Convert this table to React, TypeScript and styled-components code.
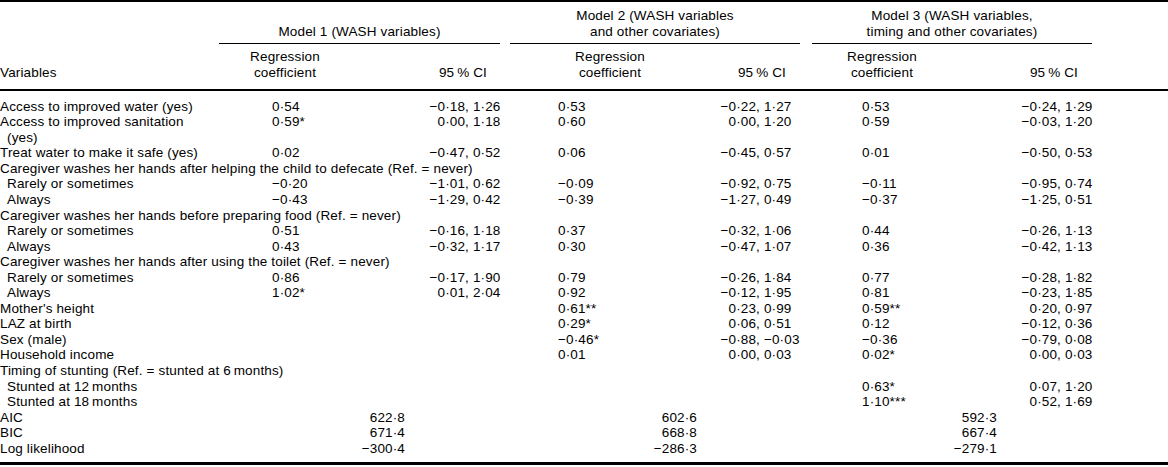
import React from 'react';
import styled, { createGlobalStyle } from 'styled-components';

const Global = createGlobalStyle`
  html, body { margin: 0; padding: 0; background: #fff; }
  body {
    font-family: "Liberation Sans", Arial, Helvetica, sans-serif;
    font-size: 13.5px;
    letter-spacing: 0.15px;
    color: #000;
  }
`;

const COLS = '219px 201px 80px 10px 195px 95px 12px 198px 82px 1fr';

const Table = styled.div`
  width: 1168px;
  border-top: 2px solid #000;
  border-bottom: 3px solid #000;
  line-height: 15.55px;
`;

const GridRow = styled.div`
  display: grid;
  grid-template-columns: ${COLS};
`;

const GroupHead = styled(GridRow)`
  padding-top: 6px;
`;

const GroupCell = styled.div<{ $col: string }>`
  grid-column: ${(p) => p.$col};
  display: flex;
  flex-direction: column;
  justify-content: flex-end;
  text-align: center;
  padding-bottom: 4px;
  border-bottom: 1px solid #000;
`;

const SubHead = styled(GridRow)`
  padding: 5.3px 0 8.5px;
  border-bottom: 2px solid #000;
  align-items: end;
`;

const Cell = styled.div``;

const CoefHead = styled.div<{ $w: number }>`
  width: ${(p) => p.$w}px;
  text-align: center;
`;

const CiHead = styled.div<{ $pr: number }>`
  text-align: right;
  padding-right: ${(p) => p.$pr}px;
  white-space: nowrap;
`;

const Body = styled.div`
  padding: 7.7px 0 5.3px;
`;

const Label = styled.div<{ $indent: boolean }>`
  padding-left: 7px;
  text-indent: ${(p) => (p.$indent ? 0 : -7)}px;
  white-space: nowrap;
`;

const SectionLabel = styled.div`
  grid-column: 1 / -1;
  white-space: nowrap;
`;

const Coef = styled.div<{ $pl: number }>`
  padding-left: ${(p) => p.$pl}px;
  white-space: nowrap;
`;

const Ci = styled.div<{ $pr: number }>`
  display: grid;
  grid-template-columns: 1fr 31px;
  padding-right: ${(p) => p.$pr}px;
  white-space: nowrap;
`;

const CiLow = styled.span`
  text-align: right;
`;

const CiHigh = styled.span`
  text-align: left;
`;

const Stat = styled.div<{ $pr: number }>`
  text-align: right;
  padding-right: ${(p) => p.$pr}px;
  white-space: nowrap;
`;

type Model = { coefPl: number; ciPr: number; statPr: number; headW: number; ciHeadPr: number; col: string };

const MODELS: Model[] = [
  { coefPl: 53, ciPr: 0, statPr: 15, headW: 132, ciHeadPr: 13, col: '2 / 4' },
  { coefPl: 48, ciPr: 9, statPr: 8, headW: 200, ciHeadPr: 14, col: '5 / 7' },
  { coefPl: 50, ciPr: 0, statPr: 13, headW: 140, ciHeadPr: 14, col: '8 / 10' },
];

type DataLine = { kind: 'data'; label: React.ReactNode; indent?: boolean; vals: ([string, string] | null)[] };
type SectionLine = { kind: 'section'; label: string };
type StatLine = { kind: 'stat'; label: string; vals: string[] };
type Line = DataLine | SectionLine | StatLine;

const d = (label: React.ReactNode, vals: ([string, string] | null)[], indent = false): DataLine => ({
  kind: 'data',
  label,
  indent,
  vals,
});

const LINES: Line[] = [
  d('Access to improved water (yes)', [['0·54', '−0·18, 1·26'], ['0·53', '−0·22, 1·27'], ['0·53', '−0·24, 1·29']]),
  d(
    <>
      Access to improved sanitation
      <br />
      (yes)
    </>,
    [['0·59*', '0·00, 1·18'], ['0·60', '0·00, 1·20'], ['0·59', '−0·03, 1·20']],
  ),
  d('Treat water to make it safe (yes)', [['0·02', '−0·47, 0·52'], ['0·06', '−0·45, 0·57'], ['0·01', '−0·50, 0·53']]),
  { kind: 'section', label: 'Caregiver washes her hands after helping the child to defecate (Ref. = never)' },
  d('Rarely or sometimes', [['−0·20', '−1·01, 0·62'], ['−0·09', '−0·92, 0·75'], ['−0·11', '−0·95, 0·74']], true),
  d('Always', [['−0·43', '−1·29, 0·42'], ['−0·39', '−1·27, 0·49'], ['−0·37', '−1·25, 0·51']], true),
  { kind: 'section', label: 'Caregiver washes her hands before preparing food (Ref. = never)' },
  d('Rarely or sometimes', [['0·51', '−0·16, 1·18'], ['0·37', '−0·32, 1·06'], ['0·44', '−0·26, 1·13']], true),
  d('Always', [['0·43', '−0·32, 1·17'], ['0·30', '−0·47, 1·07'], ['0·36', '−0·42, 1·13']], true),
  { kind: 'section', label: 'Caregiver washes her hands after using the toilet (Ref. = never)' },
  d('Rarely or sometimes', [['0·86', '−0·17, 1·90'], ['0·79', '−0·26, 1·84'], ['0·77', '−0·28, 1·82']], true),
  d('Always', [['1·02*', '0·01, 2·04'], ['0·92', '−0·12, 1·95'], ['0·81', '−0·23, 1·85']], true),
  d("Mother's height", [null, ['0·61**', '0·23, 0·99'], ['0·59**', '0·20, 0·97']]),
  d('LAZ at birth', [null, ['0·29*', '0·06, 0·51'], ['0·12', '−0·12, 0·36']]),
  d('Sex (male)', [null, ['−0·46*', '−0·88, −0·03'], ['−0·36', '−0·79, 0·08']]),
  d('Household income', [null, ['0·01', '0·00, 0·03'], ['0·02*', '0·00, 0·03']]),
  { kind: 'section', label: 'Timing of stunting (Ref. = stunted at 6\u2009months)' },
  d('Stunted at 12\u2009months', [null, null, ['0·63*', '0·07, 1·20']], true),
  d('Stunted at 18\u2009months', [null, null, ['1·10***', '0·52, 1·69']], true),
  { kind: 'stat', label: 'AIC', vals: ['622·8', '602·6', '592·3'] },
  { kind: 'stat', label: 'BIC', vals: ['671·4', '668·8', '667·4'] },
  { kind: 'stat', label: 'Log likelihood', vals: ['−300·4', '−286·3', '−279·1'] },
];

const CiValue: React.FC<{ value: string; pr: number }> = ({ value, pr }) => {
  const [lo, hi] = value.split(', ');
  return (
    <Ci $pr={pr}>
      <CiLow>{lo},</CiLow>
      <CiHigh>{'\u00a0' + hi}</CiHigh>
    </Ci>
  );
};

const renderLine = (line: Line, i: number) => {
  if (line.kind === 'section') {
    return (
      <GridRow key={i}>
        <SectionLabel>{line.label}</SectionLabel>
      </GridRow>
    );
  }
  if (line.kind === 'stat') {
    return (
      <GridRow key={i}>
        <Label $indent={false}>{line.label}</Label>
        {MODELS.map((m, k) => (
          <React.Fragment key={k}>
            <Stat $pr={m.statPr}>{line.vals[k]}</Stat>
            <Cell />
            <Cell />
          </React.Fragment>
        ))}
      </GridRow>
    );
  }
  return (
    <GridRow key={i}>
      <Label $indent={!!line.indent}>{line.label}</Label>
      {MODELS.map((m, k) => {
        const v = line.vals[k];
        return (
          <React.Fragment key={k}>
            <Coef $pl={m.coefPl}>{v ? v[0] : ''}</Coef>
            {v ? <CiValue value={v[1]} pr={m.ciPr} /> : <Cell />}
            <Cell />
          </React.Fragment>
        );
      })}
    </GridRow>
  );
};

export default function App() {
  return (
    <>
      <Global />
      <Table>
        <GroupHead>
          <GroupCell $col={MODELS[0].col}>
            <span>Model 1 (WASH variables)</span>
          </GroupCell>
          <GroupCell $col={MODELS[1].col}>
            <span>
              Model 2 (WASH variables
              <br />
              and other covariates)
            </span>
          </GroupCell>
          <GroupCell $col={MODELS[2].col}>
            <span>
              Model 3 (WASH variables,
              <br />
              timing and other covariates)
            </span>
          </GroupCell>
        </GroupHead>
        <SubHead>
          <Cell>Variables</Cell>
          {MODELS.map((m, k) => (
            <React.Fragment key={k}>
              <CoefHead $w={m.headW}>
                Regression
                <br />
                coefficient
              </CoefHead>
              <CiHead $pr={m.ciHeadPr}>95{'\u2009'}% CI</CiHead>
              <Cell />
            </React.Fragment>
          ))}
        </SubHead>
        <Body>{LINES.map(renderLine)}</Body>
      </Table>
    </>
  );
}
